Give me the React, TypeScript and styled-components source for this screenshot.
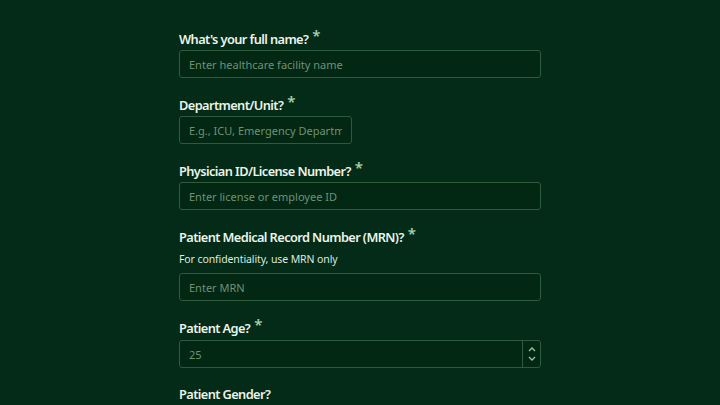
import React from "react";
import styled, { createGlobalStyle } from "styled-components";

const Global = createGlobalStyle`
  html, body { margin: 0; padding: 0; background: #032b17; }
  body { font-family: "Noto Sans", "Open Sans", sans-serif; }
  * { box-sizing: border-box; }
`;

const Page = styled.div`
  min-height: 405px;
  background: #032b17;
  display: flex;
  justify-content: center;
  padding-top: 28px;
`;

const Form = styled.form`
  width: 362px;
  display: flex;
  flex-direction: column;
  gap: 16px;
`;

const Group = styled.div`
  display: flex;
  flex-direction: column;
`;

const Label = styled.label`
  font-size: 12.8px;
  font-weight: 600;
  color: #eaf4ea;
  line-height: 20px;
  height: 20px;
  margin-bottom: 2px;
  letter-spacing: -0.6px;
`;

const Star = styled.span`
  color: #a9cfae;
  font-size: 15px;
  margin-left: 4px;
  position: relative;
  top: -3px;
`;

const Helper = styled.div`
  font-size: 10.5px;
  color: #dfe9df;
  line-height: 16px;
  margin-top: 3px;
  margin-bottom: 6px;
  letter-spacing: -0.1px;
`;

const Input = styled.input<{ $w?: number }>`
  width: ${(p) => (p.$w ? `${p.$w}px` : "100%")};
  height: 28px;
  background: #022712;
  border: 1px solid #2f5b3d;
  border-radius: 3px;
  padding: 0 9px;
  font-family: inherit;
  font-size: 11px;
  color: #7a9b80;
  outline: none;
  &::placeholder { color: #6f9275; }
`;

const NumberWrap = styled.div`
  display: flex;
  height: 28px;
  margin-top: 1px;
  border: 1px solid #2f5b3d;
  border-radius: 3px;
  background: #022712;
  overflow: hidden;
`;

const NumberField = styled.div`
  flex: 1;
  display: flex;
  align-items: center;
  padding: 0 9px;
  font-size: 11px;
  color: #6f9275;
`;

const Spinner = styled.div`
  width: 18px;
  border-left: 1px solid #2f5b3d;
  display: flex;
  flex-direction: column;
  align-items: center;
  justify-content: center;
  gap: 4px;
`;

const Chevron = ({ up }: { up?: boolean }) => (
  <svg width="8" height="5" viewBox="0 0 8 5">
    <path
      d={up ? "M1 4 L4 1 L7 4" : "M1 1 L4 4 L7 1"}
      stroke="#9cc5a3"
      strokeWidth="1.3"
      fill="none"
    />
  </svg>
);

export default function App() {
  return (
    <>
      <Global />
      <Page>
        <Form>
          <Group>
            <Label>What's your full name?<Star>*</Star></Label>
            <Input placeholder="Enter healthcare facility name" />
          </Group>
          <Group>
            <Label>Department/Unit?<Star>*</Star></Label>
            <Input $w={173} placeholder="E.g., ICU, Emergency Department" />
          </Group>
          <Group>
            <Label>Physician ID/License Number?<Star>*</Star></Label>
            <Input placeholder="Enter license or employee ID" />
          </Group>
          <Group>
            <Label>Patient Medical Record Number (MRN)?<Star>*</Star></Label>
            <Helper>For confidentiality, use MRN only</Helper>
            <Input placeholder="Enter MRN" />
          </Group>
          <Group>
            <Label>Patient Age?<Star>*</Star></Label>
            <NumberWrap>
              <NumberField>25</NumberField>
              <Spinner>
                <Chevron up />
                <Chevron />
              </Spinner>
            </NumberWrap>
          </Group>
          <Group>
            <Label>Patient Gender?</Label>
          </Group>
        </Form>
      </Page>
    </>
  );
}
